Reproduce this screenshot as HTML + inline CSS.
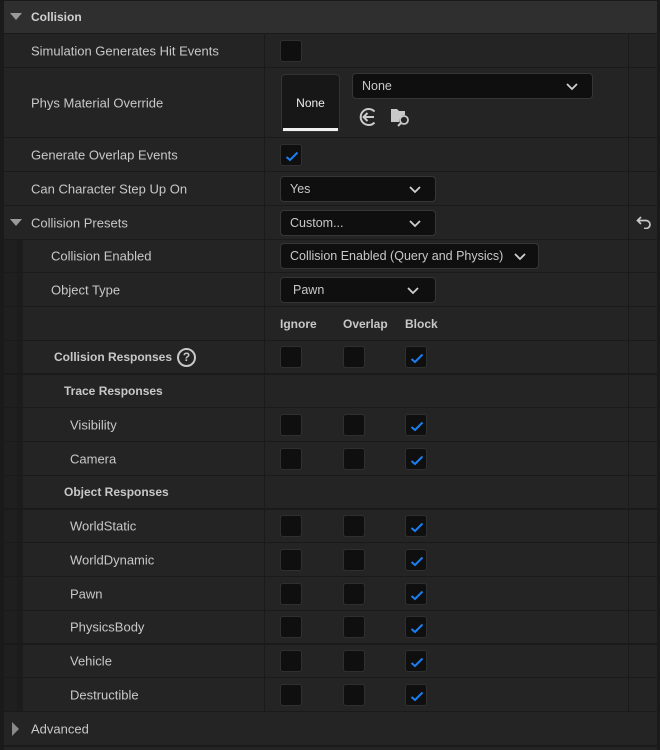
<!DOCTYPE html>
<html><head><meta charset="utf-8"><style>
*{box-sizing:border-box;margin:0;padding:0}
body{width:660px;height:750px;background:#1a1a1a;font-family:"Liberation Sans",sans-serif;font-size:13px;color:#c8c8c8;position:relative;overflow:hidden}
.r{position:absolute;left:4px;width:653px;background:#242424;border-bottom:1px solid #1a1a1a}
.r .c{position:absolute;left:260px;top:0;bottom:0;width:1px;background:#1a1a1a}
.r .d{position:absolute;left:624px;top:0;bottom:0;width:1px;background:#1a1a1a}
.n{position:absolute;left:0;top:0;bottom:0;width:13px;background:#1f1f1f}
.n2{position:absolute;left:13px;top:0;bottom:0;width:6px;background:#1c1c1c}
.l{position:absolute;top:50%;transform:translateY(-50%);white-space:nowrap}
.b{font-weight:bold;font-size:12px}
.cb{position:absolute;width:22px;height:22px;background:#0f0f0f;border:1px solid #2f2f2f;border-radius:3px;top:50%;margin-top:-11px}
.cb svg{position:absolute;left:3px;top:4px}
.dd{position:absolute;height:26px;background:#0f0f0f;border:1px solid #363636;border-radius:4px;top:50%;margin-top:-13px;padding-left:9px;line-height:24px;color:#c8c8c8;font-size:12.5px;white-space:nowrap}
.dd svg{position:absolute;right:14px;top:9px}
.tri{position:absolute;width:0;height:0}
</style></head><body>
<svg width="0" height="0" style="position:absolute"><defs>
<symbol id="ck" viewBox="0 0 16 14"><path d="M2.5 8 L6 11 L13.5 3.5" stroke="#1a7ff0" stroke-width="2" fill="none"/></symbol>
<symbol id="ch" viewBox="0 0 12 8"><path d="M1 1 L6 6 L11 1" stroke="#d0d0d0" stroke-width="1.8" fill="none"/></symbol>
</defs></svg>

<div style="position:absolute;left:4px;top:1px;width:653px;height:32px;background:#2f2f2f"></div>
<div class="tri" style="left:10px;top:13px;border-left:6px solid transparent;border-right:6px solid transparent;border-top:7px solid #9a9a9a"></div>
<div class="l b" style="left:31px;top:17px;color:#d0d0d0">Collision</div>

<div class="r" style="top:34px;height:34px"><div class="c"></div><div class="d"></div><div class="l" style="left:27px">Simulation Generates Hit Events</div><div class="cb" style="left:276px"></div></div>

<div class="r" style="top:68px;height:70px"><div class="c"></div><div class="d"></div><div class="l" style="left:27px">Phys Material Override</div>
<div style="position:absolute;left:277px;top:6px;width:59px;height:58px;background:#171717;border:1px solid #333;border-radius:4px;color:#eee;font-size:12px;text-align:center;line-height:56px">None<div style="position:absolute;left:1px;right:1px;bottom:0;height:3px;background:#f0f0f0"></div></div>
<div class="dd" style="left:348px;top:18px;width:241px">None<svg width="12" height="8"><use href="#ch"/></svg></div>
<svg style="position:absolute;left:353px;top:38px" width="22" height="22" viewBox="0 0 22 22"><path d="M17.5 5.5 A8 8 0 1 0 17.5 16.5" stroke="#ccc" stroke-width="2" fill="none"/><path d="M17 11 H7 M10.5 7 L6.5 11 L10.5 15" stroke="#ccc" stroke-width="2" fill="none"/></svg>
<svg style="position:absolute;left:386px;top:38px" width="22" height="22" viewBox="0 0 22 22"><path d="M1 3 H7 L9 5 H15 V9 A6 6 0 0 0 9 16 H1 Z" fill="#c8c8c8"/><circle cx="14" cy="14" r="4" stroke="#c8c8c8" stroke-width="1.8" fill="none"/><path d="M11 17 L8 20" stroke="#c8c8c8" stroke-width="2"/></svg>
</div>

<div class="r" style="top:138px;height:34px"><div class="c"></div><div class="d"></div><div class="l" style="left:27px">Generate Overlap Events</div><div class="cb" style="left:276px"><svg width="16" height="14"><use href="#ck"/></svg></div></div>

<div class="r" style="top:172px;height:34px"><div class="c"></div><div class="d"></div><div class="l" style="left:27px">Can Character Step Up On</div><div class="dd" style="left:276px;width:156px">Yes<svg width="12" height="8"><use href="#ch"/></svg></div></div>

<div class="r" style="top:206px;height:34px"><div class="c"></div><div class="d"></div>
<div class="tri" style="left:6px;top:13px;border-left:6px solid transparent;border-right:6px solid transparent;border-top:7px solid #9a9a9a"></div>
<div class="l" style="left:27px">Collision Presets</div><div class="dd" style="left:276px;width:156px">Custom...<svg width="12" height="8"><use href="#ch"/></svg></div>
<svg style="position:absolute;left:632px;top:9px" width="16" height="14" viewBox="0 0 16 14"><path d="M5 2 L1.5 5.5 L5 9 M1.5 5.5 H10 A4 4 0 0 1 10 13.5 H8" stroke="#c8c8c8" stroke-width="1.7" fill="none"/></svg></div>

<div class="r" style="top:240px;height:33px"><div class="n"></div><div class="n2"></div><div class="c"></div><div class="d"></div><div class="l" style="left:47px">Collision Enabled</div><div class="dd" style="left:276px;width:259px">Collision Enabled (Query and Physics)<svg width="12" height="8" style="right:12px"><use href="#ch"/></svg></div></div>

<div class="r" style="top:273px;height:34px"><div class="n"></div><div class="n2"></div><div class="c"></div><div class="d"></div><div class="l" style="left:47px">Object Type</div><div class="dd" style="left:276px;width:156px;padding-left:12px">Pawn<svg width="12" height="8" style="right:16px"><use href="#ch"/></svg></div></div>

<div class="r" style="top:307px;height:34px"><div class="n"></div><div class="n2"></div><div class="c"></div><div class="d"></div>
<div class="l b" style="left:276px">Ignore</div><div class="l b" style="left:339px">Overlap</div><div class="l b" style="left:401px">Block</div></div>

<div class="r" style="top:341px;height:34px;border-bottom-width:2px"><div class="n"></div><div class="n2"></div><div class="c"></div><div class="d"></div><div class="l b" style="left:50px">Collision Responses</div>
<div style="position:absolute;left:173px;top:7px;width:19px;height:19px;border:2px solid #c8c8c8;border-radius:50%;text-align:center;font-weight:bold;font-size:12px;line-height:15px;color:#c8c8c8">?</div>
<div class="cb" style="left:276px"></div><div class="cb" style="left:339px"></div><div class="cb" style="left:401px"><svg width="16" height="14"><use href="#ck"/></svg></div></div>

<div class="r" style="top:375px;height:33px"><div class="n"></div><div class="n2"></div><div class="c"></div><div class="d"></div><div class="l b" style="left:60px">Trace Responses</div></div>

<div class="r" style="top:408px;height:34px"><div class="n"></div><div class="n2"></div><div class="c"></div><div class="d"></div><div class="l" style="left:66px">Visibility</div><div class="cb" style="left:276px"></div><div class="cb" style="left:339px"></div><div class="cb" style="left:401px"><svg width="16" height="14"><use href="#ck"/></svg></div></div>

<div class="r" style="top:442px;height:34px"><div class="n"></div><div class="n2"></div><div class="c"></div><div class="d"></div><div class="l" style="left:66px">Camera</div><div class="cb" style="left:276px"></div><div class="cb" style="left:339px"></div><div class="cb" style="left:401px"><svg width="16" height="14"><use href="#ck"/></svg></div></div>

<div class="r" style="top:476px;height:34px;border-bottom-width:2px"><div class="n"></div><div class="n2"></div><div class="c"></div><div class="d"></div><div class="l b" style="left:60px">Object Responses</div></div>

<div class="r" style="top:510px;height:33px"><div class="n"></div><div class="n2"></div><div class="c"></div><div class="d"></div><div class="l" style="left:66px">WorldStatic</div><div class="cb" style="left:276px"></div><div class="cb" style="left:339px"></div><div class="cb" style="left:401px"><svg width="16" height="14"><use href="#ck"/></svg></div></div>

<div class="r" style="top:543px;height:34px"><div class="n"></div><div class="n2"></div><div class="c"></div><div class="d"></div><div class="l" style="left:66px">WorldDynamic</div><div class="cb" style="left:276px"></div><div class="cb" style="left:339px"></div><div class="cb" style="left:401px"><svg width="16" height="14"><use href="#ck"/></svg></div></div>

<div class="r" style="top:577px;height:34px"><div class="n"></div><div class="n2"></div><div class="c"></div><div class="d"></div><div class="l" style="left:66px">Pawn</div><div class="cb" style="left:276px"></div><div class="cb" style="left:339px"></div><div class="cb" style="left:401px"><svg width="16" height="14"><use href="#ck"/></svg></div></div>

<div class="r" style="top:611px;height:34px;border-bottom-width:2px"><div class="n"></div><div class="n2"></div><div class="c"></div><div class="d"></div><div class="l" style="left:66px">PhysicsBody</div><div class="cb" style="left:276px"></div><div class="cb" style="left:339px"></div><div class="cb" style="left:401px"><svg width="16" height="14"><use href="#ck"/></svg></div></div>

<div class="r" style="top:645px;height:33px"><div class="n"></div><div class="n2"></div><div class="c"></div><div class="d"></div><div class="l" style="left:66px">Vehicle</div><div class="cb" style="left:276px"></div><div class="cb" style="left:339px"></div><div class="cb" style="left:401px"><svg width="16" height="14"><use href="#ck"/></svg></div></div>

<div class="r" style="top:678px;height:34px"><div class="n"></div><div class="n2"></div><div class="c"></div><div class="d"></div><div class="l" style="left:66px">Destructible</div><div class="cb" style="left:276px"></div><div class="cb" style="left:339px"></div><div class="cb" style="left:401px"><svg width="16" height="14"><use href="#ck"/></svg></div></div>

<div class="r" style="top:712px;height:34px"><div class="tri" style="left:8px;top:10px;border-top:7px solid transparent;border-bottom:7px solid transparent;border-left:7px solid #8a8a8a"></div><div class="l" style="left:27px">Advanced</div></div>
<div style="position:absolute;left:4px;top:747px;width:653px;height:3px;background:#242424"></div>
</body></html>
